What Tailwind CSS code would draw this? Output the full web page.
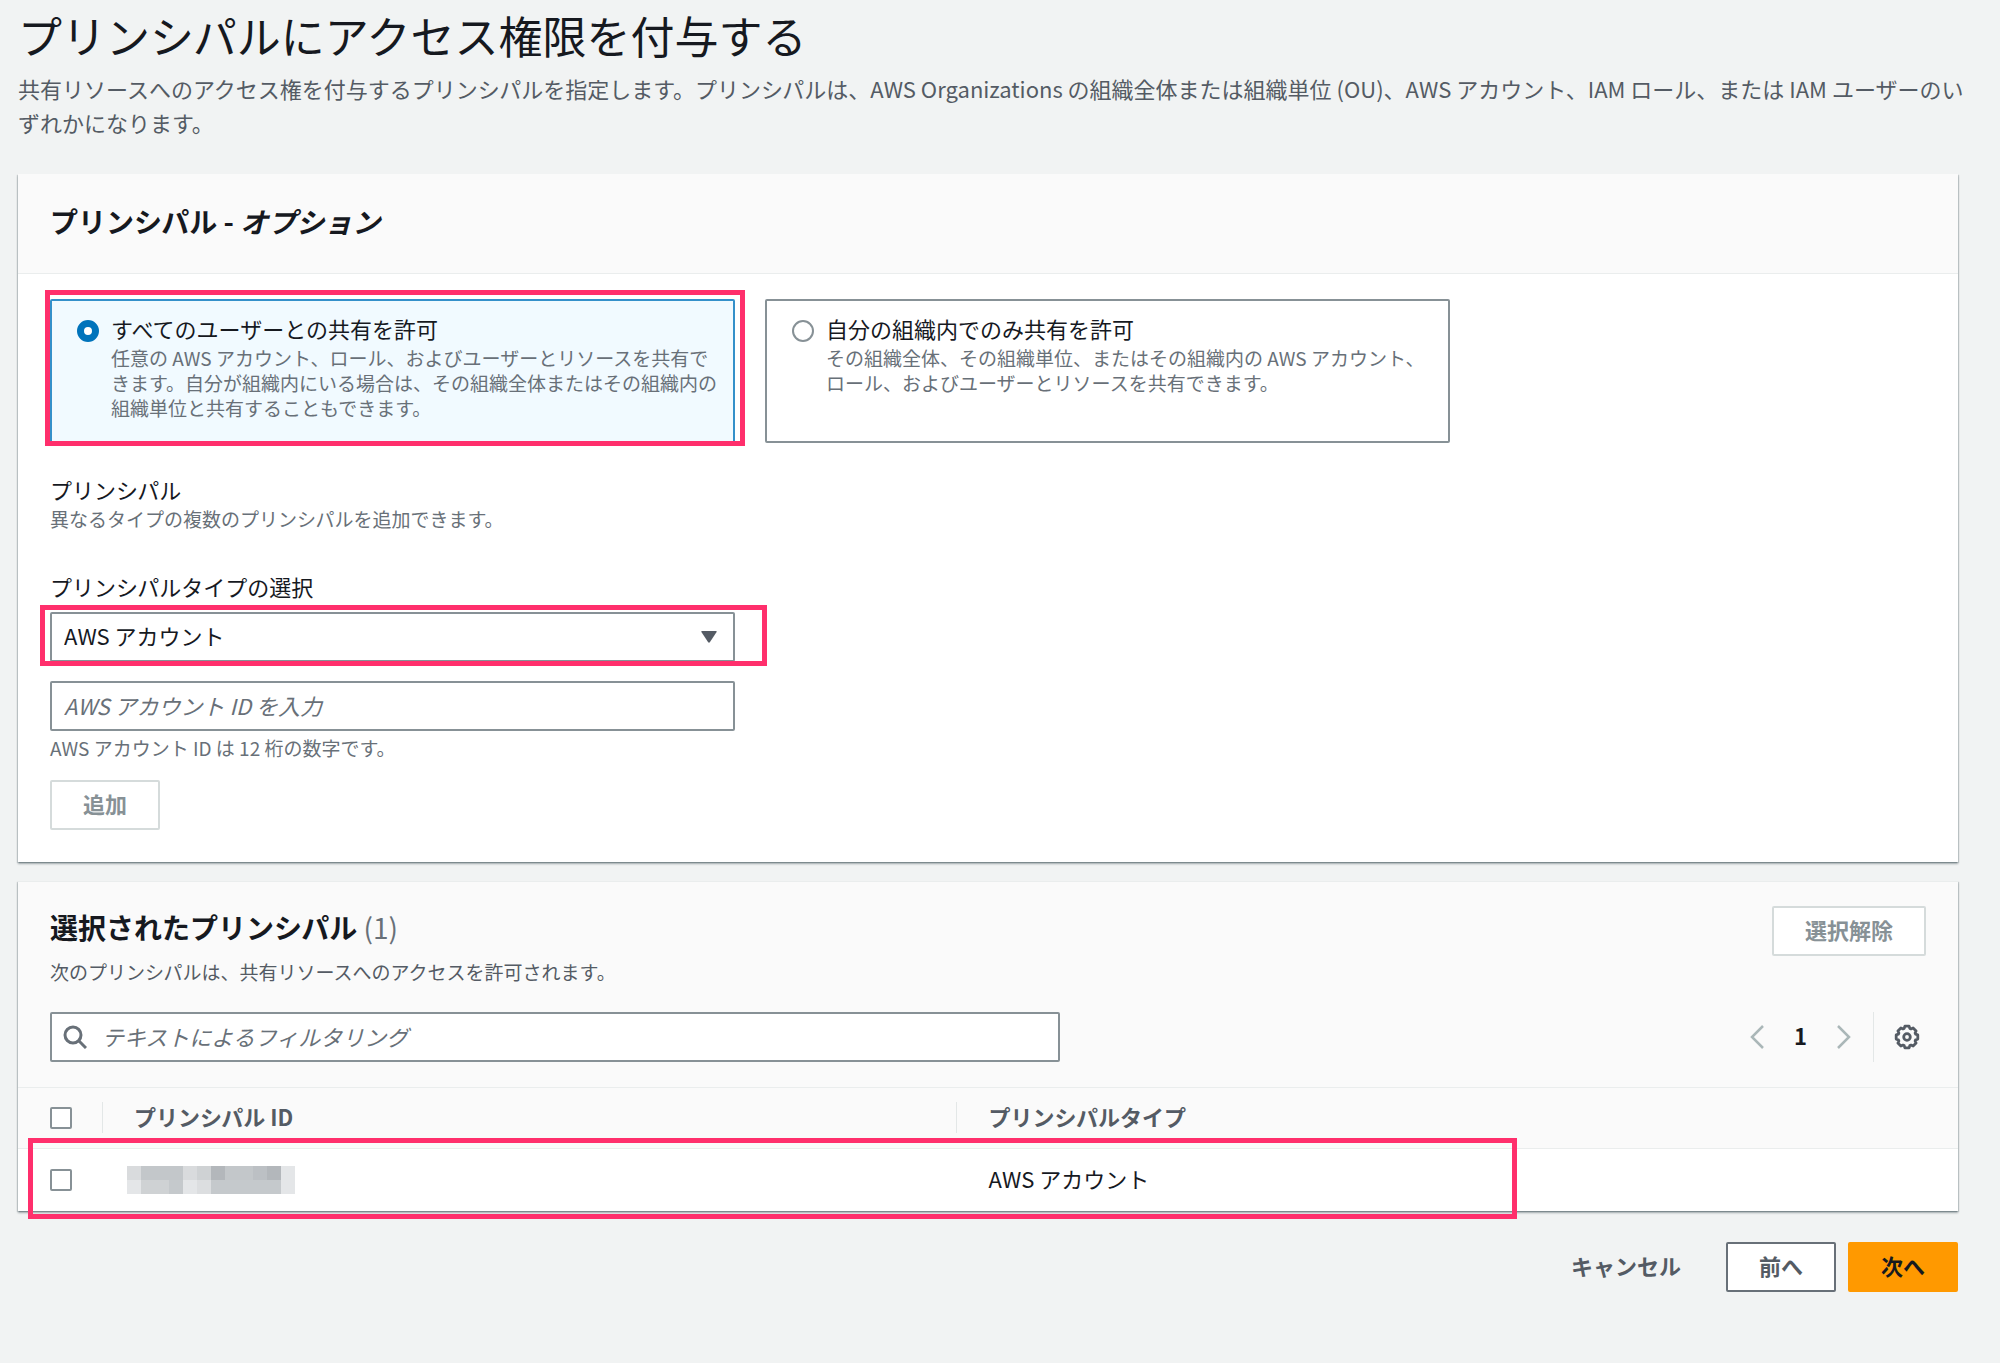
<!DOCTYPE html>
<html lang="ja">
<head>
<meta charset="utf-8">
<meta name="viewport" content="width=device-width, initial-scale=1">
<title>プリンシパルにアクセス権限を付与する</title>
<script src="https://cdn.jsdelivr.net/npm/@tailwindcss/browser@4"></script>
</head>
<body class="min-h-screen bg-[#f1f3f3] font-['Noto_Sans_CJK_JP',sans-serif] text-[22px] leading-[34px] text-[#16191f]">
<main class="pt-2 pr-[42px] pb-12 pl-[18px]">
  <header class="-mr-8">
    <h1 class="text-[44px] leading-[54px]">プリンシパルにアクセス権限を付与する</h1>
    <p class="mt-[9px] text-[#545b64]">共有リソースへのアクセス権を付与するプリンシパルを指定します。プリンシパルは、AWS Organizations の組織全体または組織単位 (OU)、AWS アカウント、IAM ロール、または IAM ユーザーのい<br>ずれかになります。</p>
  </header>

  <section class="mt-[35px] bg-white shadow-[0_2px_2px_rgba(0,28,36,0.3),1px_1px_1px_rgba(0,28,36,0.15),-1px_1px_1px_rgba(0,28,36,0.15)]">
    <div class="border-b border-[#eaeded] bg-[#fafafa] px-8 pt-[30px] pb-[35px]">
      <h2 class="text-[28px] font-bold">プリンシパル - <i>オプション</i></h2>
    </div>
    <form class="px-8 pt-[25px] pb-8">
      <div class="grid max-w-[1400px] grid-cols-2 gap-[30px]">
        <div class="relative">
          <label class="flex h-full gap-3 rounded-xs border-2 border-[#3490ca] bg-[#f1faff] pt-[10px] pr-3 pb-[21px] pl-[25px]">
            <input type="radio" name="scope" checked class="mt-[9px] size-[22px] shrink-0 appearance-none rounded-full border-[7px] border-[#0073bb] bg-white">
            <span class="block">
              <span class="block">すべてのユーザーとの共有を許可</span>
              <span class="block text-[19px] leading-[25px] text-[#687078]">任意の AWS アカウント、ロール、およびユーザーとリソースを共有で<br>きます。自分が組織内にいる場合は、その組織全体またはその組織内の<br>組織単位と共有することもできます。</span>
            </span>
          </label>
          <div class="pointer-events-none absolute -top-[9px] -right-[10px] -bottom-[3px] -left-[5px] border-5 border-[#ff2f6c]"></div>
        </div>
        <label class="flex gap-3 rounded-xs border-2 border-[#879196] bg-white pt-[10px] pr-3 pb-[21px] pl-[25px]">
          <input type="radio" name="scope" class="mt-[9px] size-[22px] shrink-0 appearance-none rounded-full border-2 border-[#879196] bg-white">
          <span class="block">
            <span class="block">自分の組織内でのみ共有を許可</span>
            <span class="block text-[19px] leading-[25px] text-[#687078]">その組織全体、その組織単位、またはその組織内の AWS アカウント、<br>ロール、およびユーザーとリソースを共有できます。</span>
          </span>
        </label>
      </div>

      <div class="mt-[29px]">
        <h3>プリンシパル</h3>
        <p class="text-[19px] leading-[25px] text-[#687078]">異なるタイプの複数のプリンシパルを追加できます。</p>
      </div>

      <div class="mt-[38px] max-w-[685px]">
        <label for="ptype" class="block">プリンシパルタイプの選択</label>
        <div class="relative mt-[9px]">
          <select id="ptype" class="block h-[50px] w-full appearance-none rounded-xs border-2 border-[#879196] bg-white px-3 pb-1">
            <option>AWS アカウント</option>
          </select>
          <svg class="pointer-events-none absolute top-[19px] right-[18px] h-3 w-4" viewBox="0 0 16 12" fill="#545b64"><path d="M1 0h14q1 0 .6 1L9 11q-1 1.300-2 0L.4 1Q0 0 1 0z"/></svg>
          <div class="pointer-events-none absolute -top-[7px] -right-8 -bottom-1 -left-[10px] border-5 border-[#ff2f6c]"></div>
        </div>
        <input aria-label="AWS アカウント ID" aria-describedby="idhint" placeholder="AWS アカウント ID を入力" class="mt-[19px] block h-[50px] w-full rounded-xs border-2 border-[#879196] bg-white px-3 pb-[2px] placeholder:text-[#687078] placeholder:italic">
        <p id="idhint" class="mt-1 text-[19px] leading-[25px] text-[#687078]">AWS アカウント ID は 12 桁の数字です。</p>
        <button type="button" disabled class="mt-5 block h-[50px] rounded-xs border-2 border-[#d5dbdb] bg-white px-[31px] pb-1 font-bold text-[#879196]">追加</button>
      </div>
    </form>
  </section>

  <section class="relative mt-[19px] bg-white shadow-[0_2px_2px_rgba(0,28,36,0.3),1px_1px_1px_rgba(0,28,36,0.15),-1px_1px_1px_rgba(0,28,36,0.15)]">
    <div class="border-t border-b border-[#eaeded] bg-[#fafafa] px-8 pt-6 pb-[25px]">
      <div class="flex items-start justify-between">
        <div class="pt-1">
          <h2 class="text-[28px] font-bold">選択されたプリンシパル <span class="font-normal text-[#687078]">(1)</span></h2>
          <p class="mt-[15px] text-[19px] leading-[25px] text-[#545b64]">次のプリンシパルは、共有リソースへのアクセスを許可されます。</p>
        </div>
        <button type="button" disabled class="h-[50px] rounded-xs border-2 border-[#d5dbdb] bg-white px-[31px] pb-1 font-bold text-[#879196]">選択解除</button>
      </div>
      <div class="mt-[28px] flex items-center justify-between">
        <div class="relative w-[54%] max-w-[1010px]">
          <input type="search" aria-label="フィルタリング" placeholder="テキストによるフィルタリング" class="block h-[50px] w-full rounded-xs border-2 border-[#879196] bg-white pr-3 pb-[2px] pl-[50px] placeholder:text-[#687078] placeholder:italic">
          <svg class="absolute top-[13px] left-[13px] size-6" viewBox="0 0 24 24" fill="none" stroke="#687078" stroke-width="3"><circle cx="10" cy="10" r="8"/><path d="M16 16l7 7"/></svg>
        </div>
        <div class="flex items-center">
          <button type="button" aria-label="前のページ" class="flex w-[14px] justify-center"><svg class="h-6 w-[14px]" viewBox="0 0 14 24" fill="none" stroke="#aab7b8" stroke-width="2.500"><path d="M13 1L2 12l11 11"/></svg></button>
          <span class="w-[73px] pb-1 text-center font-bold">1</span>
          <button type="button" aria-label="次のページ" class="flex w-[14px] justify-center"><svg class="h-6 w-[14px]" viewBox="0 0 14 24" fill="none" stroke="#aab7b8" stroke-width="2.500"><path d="M1 1l11 11L1 23"/></svg></button>
          <span class="ml-[22px] h-[50px] w-px bg-[#e3e7e7]"></span>
          <button type="button" aria-label="設定" class="mr-[6px] ml-5"><svg class="size-[26px]" viewBox="0 0 26 26" fill="none" stroke="#545b64" stroke-width="2.800" stroke-linejoin="round"><path d="M10.900 2.200h4.200l.7 2.200 1.200.5 2.100-1 3 3-1 2.100.5 1.200 2.200.7v4.200l-2.200.7-.5 1.200 1 2.100-3 3-2.100-1-1.200.5-.7 2.200h-4.200l-.7-2.200-1.200-.5-2.100 1-3-3 1-2.100-.5-1.200-2.200-.7v-4.200l2.200-.7.5-1.200-1-2.100 3-3 2.100 1 1.200-.5z"/><circle cx="13" cy="13" r="3.300"/></svg></button>
        </div>
      </div>
    </div>
    <table class="w-full table-fixed border-collapse text-left">
      <thead class="bg-[#fafafa] text-[#545b64]">
        <tr class="h-[60px] border-b border-[#eaeded]">
          <th class="w-[85px] p-0"><div class="flex h-[31px] items-center border-r border-[#e3e7e7] pl-8"><input type="checkbox" aria-label="すべて選択" class="size-[22px] appearance-none rounded-xs border-2 border-[#879196] bg-white"></div></th>
          <th class="w-[44%] p-0"><div class="flex h-[31px] items-center border-r border-[#e3e7e7] pb-1 pl-[31px]">プリンシパル ID</div></th>
          <th class="p-0 pb-1 pl-8">プリンシパルタイプ</th>
        </tr>
      </thead>
      <tbody>
        <tr class="h-[63px]">
          <td class="p-0 pl-8"><input type="checkbox" aria-label="行を選択" class="block size-[22px] appearance-none rounded-xs border-2 border-[#879196] bg-white"></td>
          <td class="p-0 pl-6"><svg class="h-7 w-[168px]" viewBox="0 0 168 28" shape-rendering="crispEdges"><path fill="#d9dbdd" d="M0 0h14v14H0zM56 0h14v14H56z"/><path fill="#c3c7ca" d="M14 0h42v14H14zM98 0h28v14H98z"/><path fill="#cfd2d4" d="M70 0h14v14H70zM14 14h28v14H14z"/><path fill="#b3b7bb" d="M84 0h14v14H84zM140 0h14v14h-14z"/><path fill="#bcc0c4" d="M126 0h14v14h-14z"/><path fill="#e4e6e8" d="M154 0h14v28h-14zM0 14h14v14H0zM56 14h14v14H56z"/><path fill="#c5c9cc" d="M42 14h14v14H42zM84 14h70v14H84z"/><path fill="#dcdee0" d="M70 14h14v14H70z"/></svg></td>
          <td class="p-0 pb-1 pl-8">AWS アカウント</td>
        </tr>
      </tbody>
    </table>
    <div class="pointer-events-none absolute right-[441px] -bottom-2 left-[10px] h-[81px] border-5 border-[#ff2f6c]"></div>
  </section>

  <footer class="mt-[31px] flex items-center justify-end font-bold text-[#545b64]">
    <a href="#" class="mr-[45px] pb-1">キャンセル</a>
    <button type="button" class="mr-3 h-[50px] rounded-xs border-2 border-[#687078] bg-white px-[31px] pb-1">前へ</button>
    <button type="button" class="h-[50px] rounded-xs border-2 border-[#ff9900] bg-[#ff9900] px-[31px] pb-1 text-[#16191f]">次へ</button>
  </footer>
</main>
</body>
</html>
